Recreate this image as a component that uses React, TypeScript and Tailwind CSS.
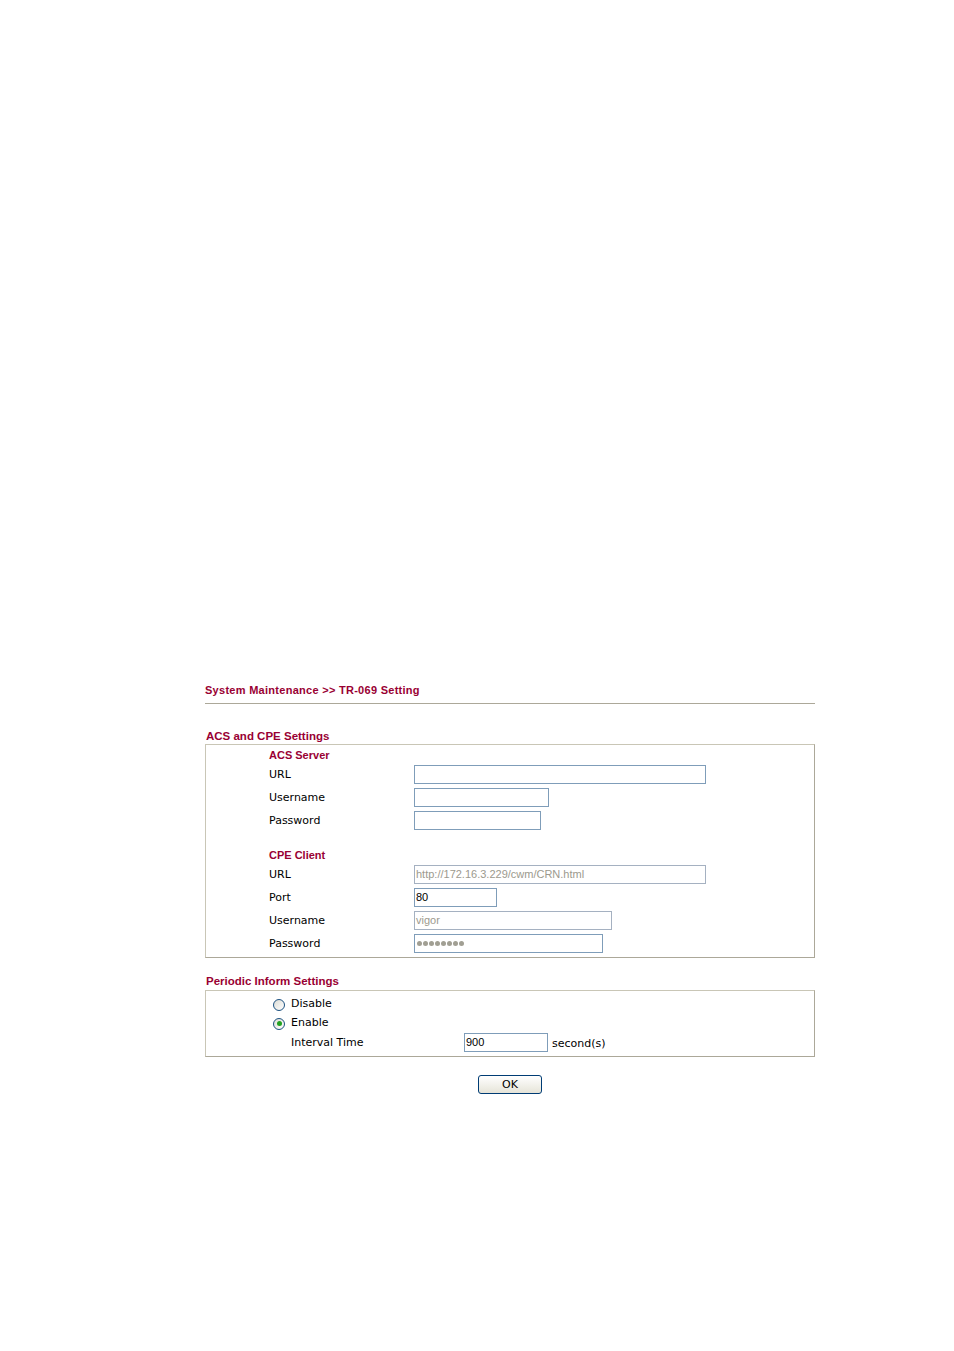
import type { ReactNode } from 'react';

const labelFont = "font-['DejaVu_Sans','Verdana',sans-serif] text-[11px] text-black";
const headFont = "font-['Liberation_Sans','Arial',sans-serif] font-bold text-[#990033]";
const inputBase =
  "h-[19px] border bg-white px-[1px] font-['Liberation_Sans','Arial',sans-serif] text-[11px] leading-[17px] outline-none";

function Field({
  width,
  value,
  disabled,
  dots,
}: {
  width: number;
  value?: string;
  disabled?: boolean;
  dots?: boolean;
}) {
  const cls = disabled
    ? `${inputBase} border-[#a5b1c1] text-[#9c9a8e]`
    : `${inputBase} border-[#7f9db9] text-black`;
  return (
    <div className={cls} style={{ width }}>
      {dots ? (
        <span className="flex h-full items-center gap-[1px] pl-[1px]">
          {Array.from({ length: 8 }).map((_, i) => (
            <span key={i} className="h-[5px] w-[5px] rounded-full bg-[#a19f93]" />
          ))}
        </span>
      ) : (
        value
      )}
    </div>
  );
}

function Row({ label, children }: { label: string; children: ReactNode }) {
  return (
    <div className="flex h-[19px] items-center">
      <div className={`mt-[2px] w-[145px] ${labelFont}`}>{label}</div>
      {children}
    </div>
  );
}

function SubHead({ children }: { children: ReactNode }) {
  return (
    <div className={`flex h-[20px] items-center text-[11px] ${headFont}`}>{children}</div>
  );
}

function Radio({ checked }: { checked?: boolean }) {
  return (
    <span className="flex h-[12px] w-[12px] items-center justify-center rounded-full border border-[#1c5180] bg-gradient-to-br from-[#dcdcd5] to-white">
      {checked ? <span className="h-[5px] w-[5px] rounded-full bg-[#21a121]" /> : null}
    </span>
  );
}

export default function App() {
  return (
    <div className="min-h-[1351px] w-full bg-white">
      <div className="ml-[205px] w-[610px] pt-[684px]">
        <div className={`text-[11px] leading-[13px] tracking-[0.28px] ${headFont}`}>
          System Maintenance &gt;&gt; TR-069 Setting
        </div>
        <div className="mt-[6px] border-b border-[#aca899]" />

        <div className={`mt-[25px] pl-[1px] text-[11.5px] leading-[14px] ${headFont}`}>
          ACS and CPE Settings
        </div>
        <div className="mt-[1px] border border-[#c9c6b6] border-b-[#aca899] border-r-[#aca899] pb-[4px] pl-[63px]">
          <SubHead>ACS Server</SubHead>
          <div className="flex flex-col gap-[4px]">
            <Row label="URL">
              <Field width={292} />
            </Row>
            <Row label="Username">
              <Field width={135} />
            </Row>
            <Row label="Password">
              <Field width={127} />
            </Row>
          </div>

          <div className="mt-[15px]">
            <SubHead>CPE Client</SubHead>
          </div>
          <div className="flex flex-col gap-[4px]">
            <Row label="URL">
              <Field width={292} value="http://172.16.3.229/cwm/CRN.html" disabled />
            </Row>
            <Row label="Port">
              <Field width={83} value="80" />
            </Row>
            <Row label="Username">
              <Field width={198} value="vigor" disabled />
            </Row>
            <Row label="Password">
              <Field width={189} dots />
            </Row>
          </div>
        </div>

        <div className={`mt-[16px] pl-[1px] text-[11.5px] leading-[14px] ${headFont}`}>
          Periodic Inform Settings
        </div>
        <div className="mt-[2px] border border-[#c9c6b6] border-b-[#aca899] border-r-[#aca899] pb-[4px] pl-[67px] pt-[4px]">
          <div className="flex h-[19px] items-center gap-[6px]">
            <Radio />
            <span className={labelFont}>Disable</span>
          </div>
          <div className="flex h-[19px] items-center gap-[6px]">
            <Radio checked />
            <span className={labelFont}>Enable</span>
          </div>
          <div className="flex h-[19px] items-center pl-[18px]">
            <div className={`mt-[2px] w-[173px] ${labelFont}`}>Interval Time</div>
            <Field width={84} value="900" />
            <span className={`ml-[4px] mt-[4px] ${labelFont}`}>second(s)</span>
          </div>
        </div>

        <div className="mt-[18px] flex justify-center">
          <button className="h-[19px] w-[64px] rounded-[3px] border border-[#003c74] bg-gradient-to-b from-white to-[#e6e4d8] font-['DejaVu_Sans','Verdana',sans-serif] text-[11px] leading-[17px] text-black">
            OK
          </button>
        </div>
      </div>
    </div>
  );
}
